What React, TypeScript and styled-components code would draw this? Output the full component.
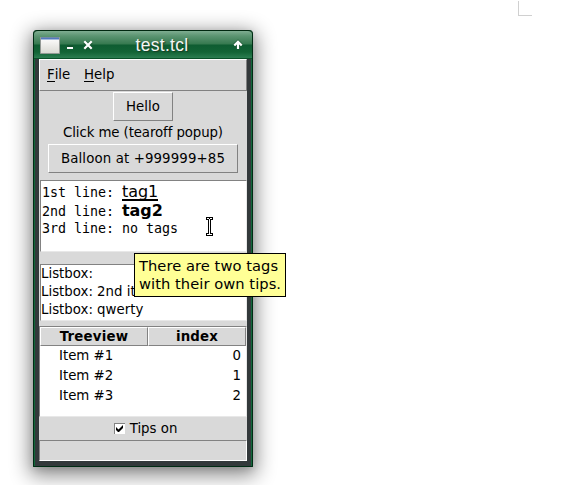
import React from "react";
import styled, { createGlobalStyle } from "styled-components";

const Global = createGlobalStyle`
  * { box-sizing: border-box; }
  body { margin: 0; background: #fff; overflow: hidden; }
`;
const Desktop = styled.main`
  position: relative;
  width: 588px;
  height: 485px;
  padding: 30px 0 0 33px;
  overflow: hidden;
  background: #fff;
  color: #000;
  font: 13.333px/18px "DejaVu Sans", sans-serif;
  white-space: pre;
`;
const CornerMark = styled.div`
  position: absolute;
  left: 518px;
  top: 1px;
  width: 14px;
  height: 15px;
  border: solid #d0d0d0;
  border-width: 0 0 1px 1px;
`;
const Frame = styled.section`
  width: 220px;
  height: 437px;
  border: 1px solid #002c14;
  border-top: 0;
  border-radius: 4px 4px 1px 1px;
  background: #12663a;
  padding: 0 1px 1px;
  box-shadow: 0 5px 20px 3px rgba(0, 0, 0, 0.48), 0 2px 7px rgba(0, 0, 0, 0.1);
`;
const TitleBar = styled.header`
  position: relative;
  display: flex;
  align-items: center;
  height: 29px;
  margin: 0 -1px;
  border-top: 1px solid #00270f;
  border-bottom: 1px solid #0a5029;
  border-radius: 4px 4px 0 0;
  background: linear-gradient(#7fad91 0, #5b9471 5px, #36794f 13px, #0e5c31 14px, #126335 21px, #2b7d50 27px);
`;
const TitleIcons = styled.svg`
  position: absolute;
  left: -1px;
  top: -1px;
`;
const Title = styled.h1`
  flex: 1;
  margin: 1px 0 0 38px;
  text-align: center;
  font: 17.5px/26px "Liberation Sans", sans-serif;
  letter-spacing: 0.3px;
  color: #f4f6f4;
  text-shadow: 1px 1px 1px #173d25;
`;
const Body = styled.div`
  height: 407px;
  border: solid #33393b;
  border-width: 0 4px 5px;
  background: #d9d9d9;
`;
const MenuBar = styled.nav`
  display: flex;
  gap: 13px;
  height: 32px;
  padding: 6px 7px;
  border: 1px solid;
  border-color: #fff #828282 #828282 #fff;
`;
const MenuItem = styled.span<{ $w: number }>`
  width: ${p => p.$w}px;
`;
const Mnemonic = styled.span`
  display: inline-block;
  height: 16px;
  border-bottom: 1px solid #000;
`;
const Controls = styled.div`
  display: flex;
  flex-direction: column;
  align-items: center;
  height: 89px;
  padding-top: 1px;
`;
const Button = styled.button<{ $w: number; $track?: number }>`
  width: ${p => p.$w}px;
  height: 29px;
  padding: 0;
  border: 1px solid;
  border-color: #fff #828282 #828282 #fff;
  border-radius: 0;
  background: #d9d9d9;
  color: #000;
  font: inherit;
  letter-spacing: ${p => p.$track || 0}px;
`;
const Caption = styled.div`
  height: 23px;
  line-height: 23px;
  letter-spacing: -0.1px;
`;
const Field = styled.div<{ $h: number }>`
  height: ${p => p.$h}px;
  margin: 0 0 0 1px;
  border: 1px solid;
  border-color: #828282 #e8e8e8 #e8e8e8 #828282;
  background: #fff;
`;
const Editor = styled(Field)`
  padding: 1px 1px;
  font-family: "DejaVu Sans Mono", monospace;
  letter-spacing: -0.03px;
`;
const Line = styled.div<{ $h: number; $drop?: number }>`
  display: flex;
  height: ${p => p.$h}px;
  line-height: ${p => p.$h + 2 * (p.$drop || 0)}px;
`;
const Tag = styled.span<{ $bold?: boolean; $h: number }>`
  font-family: "DejaVu Sans", sans-serif;
  font-size: 16px;
  font-weight: ${p => (p.$bold ? 700 : 400)};
  letter-spacing: -0.05px;
  height: ${p => p.$h}px;
  line-height: 20px;
  margin-top: ${p => (p.$bold ? -1 : 0)}px;
  border-bottom: ${p => (p.$bold ? 0 : 2)}px solid #000;
`;
const List = styled(Field)`
  margin-top: 12px;
`;
const Tree = styled.div`
  height: 91px;
  margin: 5px 0 0 0;
  border: 1px solid;
  border-color: #828282 #e8e8e8 #e8e8e8 #828282;
  background: #fff;
`;
const TreeHead = styled.div`
  display: grid;
  grid-template-columns: 108px 98px;
  font-weight: 700;
`;
const HeadCell = styled.div`
  height: 19px;
  border: 1px solid;
  border-color: #fff #828282 #828282 #fff;
  background: #d9d9d9;
  text-align: center;
  line-height: 17px;
  letter-spacing: 0.2px;
`;
const TreeRow = styled.div`
  display: flex;
  justify-content: space-between;
  height: 20px;
  line-height: 19px;
  padding: 0 5px 0 19px;
`;
const CheckRow = styled.div`
  display: flex;
  justify-content: center;
  align-items: center;
  gap: 5px;
  height: 23px;
  padding-left: 5px;
`;
const Status = styled.footer`
  height: 21px;
  border: 1px solid;
  border-color: #828282 #fff #fff #828282;
`;
const Tooltip = styled.div`
  position: absolute;
  left: 134px;
  top: 253px;
  width: 152px;
  height: 44px;
  border: 1px solid #000;
  background: #ffff96;
  padding: 3px 4px;
  font-size: 14.667px;
  letter-spacing: 0.06px;
`;
const Cursor = styled.svg`
  position: absolute;
  left: 205px;
  top: 216px;
`;

export default function App() {
  return (
    <>
      <Global />
      <Desktop>
        <CornerMark />
        <Frame>
          <TitleBar>
            <TitleIcons width="220" height="29">
              <defs>
                <linearGradient id="paper" x2="0" y2="1">
                  <stop stopColor="#fff" />
                  <stop offset="1" stopColor="#d9d9d2" />
                </linearGradient>
              </defs>
              <path d="M7.500 7.500h19v16h-19z" fill="url(#paper)" stroke="#929994" />
              <path d="M8 8.500h18" stroke="#5279bd" strokeWidth="2" />
              <path d="M34 17h6" stroke="#123f23" strokeWidth="3" opacity=".55" />
              <path d="M34 18h6" stroke="#fff" strokeWidth="2" />
              <path d="m51.500 12 7 7m0-7-7 7" stroke="#174b2b" strokeWidth="4" opacity=".5" />
              <path d="m51.300 11.300 7.400 7.400m0-7.400-7.400 7.400" stroke="#fff" strokeWidth="2.200" />
              <path d="M205 19v-7m-3.700 3.500L205 12l3.700 3.500" fill="none" stroke="#174b2b" strokeWidth="4" opacity=".5" />
              <path d="M205 19v-7m-3.700 3.500L205 11.800l3.700 3.700" fill="none" stroke="#fff" strokeWidth="2.200" />
            </TitleIcons>
            <Title>test.tcl</Title>
          </TitleBar>
          <Body>
            <MenuBar>
              <MenuItem $w={24}><Mnemonic>F</Mnemonic>ile</MenuItem>
              <MenuItem $w={31}><Mnemonic>H</Mnemonic>elp</MenuItem>
            </MenuBar>
            <Controls>
              <Button $w={60}>Hello</Button>
              <Caption>Click me (tearoff popup)</Caption>
              <Button $w={190} $track={0.12}>Balloon at +999999+85</Button>
            </Controls>
            <Editor $h={72}>
              <Line $h={20} $drop={1}>1st line: <Tag $h={19}>tag1</Tag></Line>
              <Line $h={18} $drop={1}>2nd line: <Tag $bold $h={18}>tag2</Tag></Line>
              <Line $h={17}>3rd line: no tags</Line>
            </Editor>
            <List $h={57}>
              <Line $h={18}>Listbox:</Line>
              <Line $h={18}>Listbox: 2nd item</Line>
              <Line $h={18}>Listbox: qwerty</Line>
            </List>
            <Tree>
              <TreeHead><HeadCell>Treeview</HeadCell><HeadCell>index</HeadCell></TreeHead>
              {[0, 1, 2].map(i => (
                <TreeRow key={i}><span>Item #{i + 1}</span><span>{i}</span></TreeRow>
              ))}
            </Tree>
            <CheckRow>
              <svg width="11" height="11">
                <path d="M0 0h11v11H0z" fill="#fff" />
                <path d="M0 .5h11M.5 0v11" fill="none" stroke="#828282" />
                <path d="M2 4v3l2 2h1l4-4V2L4.500 6.500z" fill="#000" />
              </svg>
              <span>Tips on</span>
            </CheckRow>
            <Status />
          </Body>
        </Frame>
        <Tooltip>There are two tags{"\n"}with their own tips.</Tooltip>
        <Cursor width="10" height="21" shapeRendering="crispEdges">
          <path d="M1 1h7v3H6v13h2v3H1v-3h2V4H1z" fill="#000" />
          <path d="M2 2h2v1h1V2h2v1H5v15h2v1H2v-1h2V3H2z" fill="#fff" />
        </Cursor>
      </Desktop>
    </>
  );
}
